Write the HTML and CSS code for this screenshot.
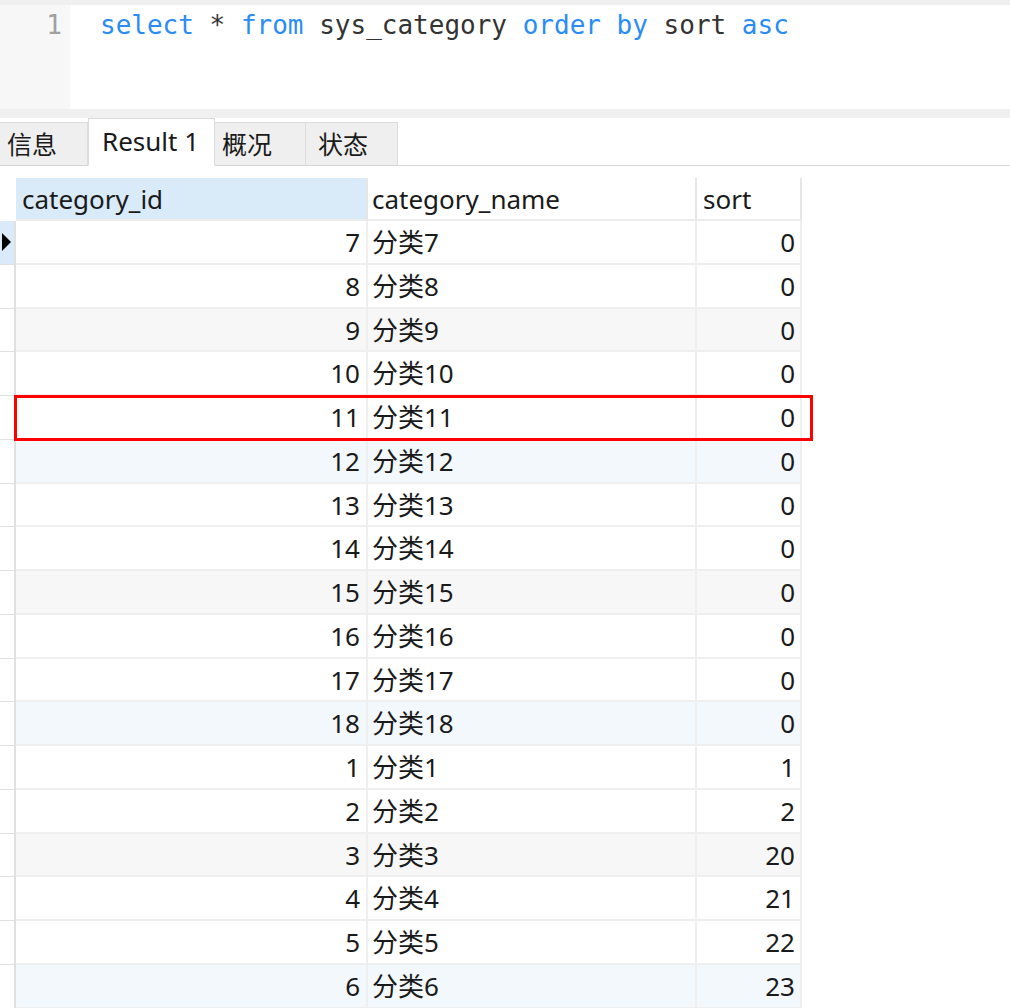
FILE: index.html
```html
<!DOCTYPE html>
<html>
<head>
<meta charset="utf-8">
<link rel="stylesheet" href="styles.css">
</head>
<body>
<div class="topstrip"></div>
<div class="editor">
  <div class="gutter"><span class="lineno">1</span></div>
  <div class="code"><span class="kw">select</span> * <span class="kw">from</span> sys_category <span class="kw">order</span> <span class="kw">by</span> sort <span class="kw">asc</span></div>
</div>
<div class="band"></div>
<div class="tabs">
  <div class="tab">信息</div>
  <div class="tab active">Result 1</div>
  <div class="tab">概况</div>
  <div class="tab">状态</div>
  <div class="tabfill"></div>
</div>
<div class="grid">
  <div class="row head">
    <div class="rh"></div>
    <div class="c sel">category_id</div>
    <div class="c name">category_name</div>
    <div class="c">sort</div>
  </div>
  <div class="row"><div class="rh cur"><span class="arrow"></span></div><div class="c num">7</div><div class="c name">分类7</div><div class="c num">0</div></div>
  <div class="row"><div class="rh"></div><div class="c num">8</div><div class="c name">分类8</div><div class="c num">0</div></div>
  <div class="row gray"><div class="rh"></div><div class="c num">9</div><div class="c name">分类9</div><div class="c num">0</div></div>
  <div class="row"><div class="rh"></div><div class="c num">10</div><div class="c name">分类10</div><div class="c num">0</div></div>
  <div class="row"><div class="rh"></div><div class="c num">11</div><div class="c name">分类11</div><div class="c num">0</div></div>
  <div class="row blue"><div class="rh"></div><div class="c num">12</div><div class="c name">分类12</div><div class="c num">0</div></div>
  <div class="row"><div class="rh"></div><div class="c num">13</div><div class="c name">分类13</div><div class="c num">0</div></div>
  <div class="row"><div class="rh"></div><div class="c num">14</div><div class="c name">分类14</div><div class="c num">0</div></div>
  <div class="row gray"><div class="rh"></div><div class="c num">15</div><div class="c name">分类15</div><div class="c num">0</div></div>
  <div class="row"><div class="rh"></div><div class="c num">16</div><div class="c name">分类16</div><div class="c num">0</div></div>
  <div class="row"><div class="rh"></div><div class="c num">17</div><div class="c name">分类17</div><div class="c num">0</div></div>
  <div class="row blue"><div class="rh"></div><div class="c num">18</div><div class="c name">分类18</div><div class="c num">0</div></div>
  <div class="row"><div class="rh"></div><div class="c num">1</div><div class="c name">分类1</div><div class="c num">1</div></div>
  <div class="row"><div class="rh"></div><div class="c num">2</div><div class="c name">分类2</div><div class="c num">2</div></div>
  <div class="row gray"><div class="rh"></div><div class="c num">3</div><div class="c name">分类3</div><div class="c num">20</div></div>
  <div class="row"><div class="rh"></div><div class="c num">4</div><div class="c name">分类4</div><div class="c num">21</div></div>
  <div class="row"><div class="rh"></div><div class="c num">5</div><div class="c name">分类5</div><div class="c num">22</div></div>
  <div class="row blue"><div class="rh"></div><div class="c num">6</div><div class="c name">分类6</div><div class="c num">23</div></div>
  <div class="highlight"></div>
</div>
</body>
</html>
```
FILE: styles.css
```css
html, body {
  margin: 0;
  padding: 0;
  background: #ffffff;
  width: 1010px;
  height: 1008px;
  overflow: hidden;
}
body {
  font-family: "Noto Sans", "Noto Sans CJK SC", sans-serif;
  color: #1a1a1a;
}
.topstrip {
  height: 5px;
  background: #f0f0f0;
}
.editor {
  display: flex;
  height: 104px;
  background: #ffffff;
}
.gutter {
  width: 70px;
  background: #f7f7f7;
  display: flex;
  justify-content: flex-end;
  padding-right: 8px;
  box-sizing: border-box;
}
.lineno, .code {
  font-family: "DejaVu Sans Mono", "Liberation Mono", monospace;
  font-size: 26px;
  line-height: 40px;
}
.lineno {
  color: #a0a0a0;
}
.code {
  padding-left: 30px;
  color: #333333;
  white-space: pre;
}
.kw {
  color: #2a8cf5;
}
.band {
  height: 9px;
  background: #f0f0f0;
}
.tabs {
  display: flex;
  align-items: flex-end;
  height: 48px;
  box-sizing: border-box;
}
.tab {
  height: 44px;
  box-sizing: border-box;
  background: #efefef;
  border: 1px solid #dcdcdc;
  border-bottom: 1px solid #d4d4d4;
  border-left: none;
  font-size: 25px;
  line-height: 42px;
  padding: 0 7px;
  color: #1a1a1a;
}
.tab:first-child {
  width: 88px;
  border-left: none;
}
.tab.active {
  height: 48px;
  width: 127px;
  background: #ffffff;
  border-bottom: 1px solid #ffffff;
  border-left: 1px solid #dcdcdc;
  padding: 0 13px;
  line-height: 44px;
  font-size: 26px;
}
.tab:nth-child(3) {
  width: 91px;
}
.tab:nth-child(4) {
  width: 92px;
  padding-left: 12px;
}
.tabfill {
  flex: 1;
  border-bottom: 1px solid #d4d4d4;
  height: 1px;
}
.grid {
  position: relative;
  margin-top: 12px;
  width: 802px;
  display: flex;
  flex-direction: column;
}
.row {
  display: grid;
  grid-template-columns: 16px 352px 329px 105px;
  height: 43.75px;
}
.row.head {
  height: 43px;
}
.row.gray .c {
  background: #f7f7f7;
}
.row.blue .c {
  background: #f3f8fd;
}
.rh {
  border-right: 2px solid #e0e0e0;
  border-bottom: 1.5px solid #e0e0e0;
  position: relative;
}
.head .rh {
  border-bottom: none;
  border-right: none;
}
.rh.cur {
  background: #dbeaf8;
}
.arrow {
  position: absolute;
  left: 2px;
  top: 12px;
  width: 0;
  height: 0;
  border-top: 9px solid transparent;
  border-bottom: 9px solid transparent;
  border-left: 9px solid #000000;
}
.c {
  font-size: 26px;
  line-height: 42px;
  padding: 0 6px;
  border-right: 2px solid #efefef;
  border-bottom: 2px solid #efefef;
  white-space: nowrap;
  overflow: hidden;
}
.c.name {
  padding-left: 4px;
}
.head .c {
  border-bottom: 2px solid #ececec;
  border-right: 2px solid #e6e6e6;
}
.c.sel {
  background: #d9eaf9;
}
.num {
  text-align: right;
}
.num:last-child {
  padding-right: 5px;
}
.highlight {
  position: absolute;
  left: 14px;
  top: 217px;
  width: 799px;
  height: 46px;
  box-sizing: border-box;
  border: 3px solid #ff0000;
}
```
